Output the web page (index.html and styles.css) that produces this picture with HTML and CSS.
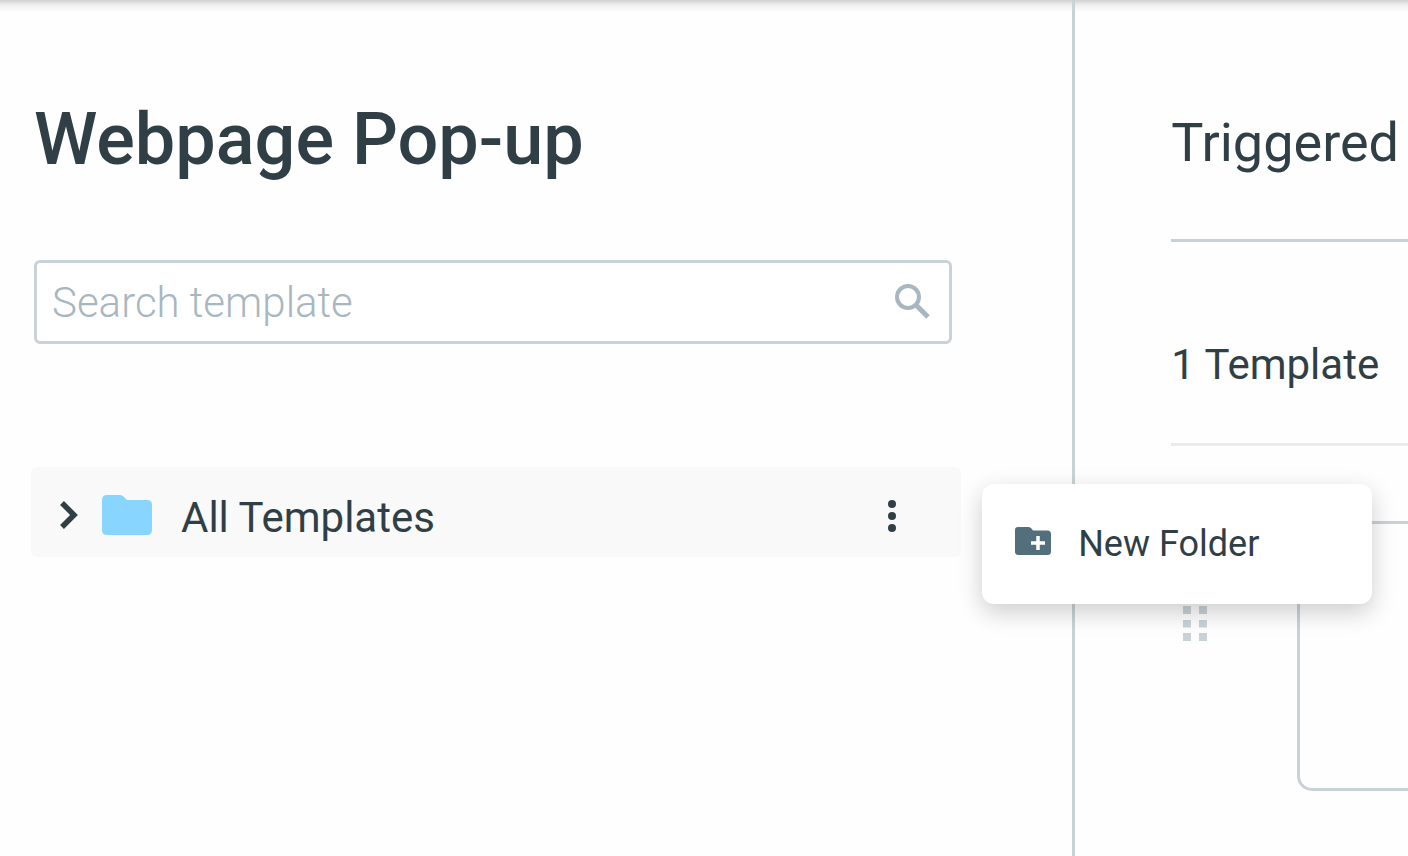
FILE: index.html
```html
<!DOCTYPE html>
<html lang="en">
  <head>
    <meta charset="UTF-8" />
    <meta name="viewport" content="width=device-width, initial-scale=1.0" />
    <title>Webpage Pop-up</title>
    <link rel="stylesheet" href="styles.css">
  </head>
  <body>
    <div class="page">
      <aside class="sidebar">
        <h1 class="title">Webpage Pop-up</h1>
        <form class="search">
          <input class="search-input" type="text" placeholder="Search template" aria-label="Search template" />
          <button class="icon-button" type="button" aria-label="Search">
            <svg width="36" height="36" viewBox="0 0 36 36">
              <circle cx="14" cy="13" r="11" fill="none" stroke="#a8b7bf" stroke-width="4" />
              <path d="M22 21L34 33" stroke="#a8b7bf" stroke-width="5" />
            </svg>
          </button>
        </form>
        <div class="folder-row">
          <button class="icon-button" type="button" aria-label="Expand">
            <svg width="18" height="28" viewBox="0 0 18 28">
              <path d="M2 2L14 14L2 26" fill="none" stroke="#303f46" stroke-width="5.500" />
            </svg>
          </button>
          <svg class="folder-icon" width="50" height="40" viewBox="0 0 50 40">
            <path d="M5 0H18Q20 0 21.500 1.500L25 5H45Q50 5 50 10V35Q50 40 45 40H5Q0 40 0 35V5Q0 0 5 0Z" fill="#88d5ff" />
          </svg>
          <span class="folder-name">All Templates</span>
          <button class="icon-button" type="button" aria-label="More">
            <svg width="8" height="34" viewBox="0 0 8 34" fill="#303f46">
              <circle cx="4" cy="6" r="4" />
              <circle cx="4" cy="18" r="4" />
              <circle cx="4" cy="30" r="4" />
            </svg>
          </button>
          <div class="menu">
            <button class="menu-item" type="button">
              <svg width="36" height="34" viewBox="0 0 36 34">
                <path d="M3 0H13Q15 0 16 1L18 3.500H32.500Q36 3.500 36 7V24.500Q36 28 32.500 28H3.500Q0 28 0 24.500V3Q0 0 3 0Z" fill="#546f7c" />
                <path d="M23 9V23M16 16H30" stroke="#fff" stroke-width="3.500" />
              </svg>
              <span>New Folder</span>
            </button>
          </div>
        </div>
      </aside>
      <main class="content">
        <h2 class="heading">Triggered</h2>
        <div class="count">1 Template</div>
        <div class="template">
          <svg class="handle" width="24" height="36" viewBox="0 0 24 36" fill="#c8d2d7">
            <path d="M0 1H8V9H0ZM16 1H24V9H16ZM0 15H8V22.500H0ZM16 15H24V22.500H16ZM0 28H8V36H0ZM16 28H24V36H16Z" />
          </svg>
          <div class="card"></div>
        </div>
      </main>
    </div>
  </body>
</html>
```
FILE: styles.css
```css
* {
  box-sizing: border-box;
}
body {
  margin: 0;
  background-color: #fefefe;
  color: #303f46;
  font-family: Roboto, sans-serif;
  font-size: 42px;
  line-height: 50px;
}
/* shadow of the top bar */
.page {
  display: grid;
  grid-template-columns: minmax(0, 42fr) minmax(0, 13fr);
  min-height: 100vh;
  background: linear-gradient(rgba(0, 0, 0, 0.18), rgba(0, 0, 0, 0.06) 5px, rgba(0, 0, 0, 0) 12px);
}
.sidebar {
  padding: 98px 111px 0 31px;
  border-right: 3px solid #c8d2d7;
}
.title {
  margin: 0 0 78px 3px;
  font-size: 72px;
  font-weight: 500;
  line-height: 84px;
}
.search {
  display: flex;
  align-items: center;
  height: 84px;
  margin: 0 9px 123px 3px;
  padding: 0 19px 0 15px;
  background-color: #fff;
  border: 3px solid #c8d2d7;
  border-radius: 6px;
}
.search-input {
  flex: 1;
  min-width: 0;
  padding: 2px 0 0;
  border: 0;
  outline: 0;
  background: none;
  color: inherit;
  font: inherit;
  font-weight: 300;
}
.search-input::placeholder {
  color: #a8b7bf;
}
.icon-button {
  display: flex;
  padding: 0;
  border: 0;
  background: none;
  cursor: pointer;
}
.folder-row {
  position: relative;
  display: flex;
  align-items: center;
  height: 90px;
  padding: 6px 65px 0 29px;
  background-color: #f9f9f9;
  border-radius: 6px;
}
.folder-icon {
  margin: 0 29px 0 24px;
}
.folder-name {
  flex: 1;
  padding-top: 6px;
}
.menu {
  position: absolute;
  top: 17px;
  left: calc(100% + 21px);
  z-index: 1;
  width: 390px;
  background-color: #fff;
  border-radius: 12px;
  box-shadow: 0 8px 24px rgba(0, 0, 0, 0.2);
}
.menu-item {
  display: flex;
  align-items: center;
  gap: 27px;
  width: 100%;
  height: 120px;
  padding: 0 33px;
  border: 0;
  background: none;
  color: inherit;
  font: inherit;
  font-size: 36px;
  cursor: pointer;
}
.content {
  padding: 111px 0 0 96px;
  overflow: hidden;
}
.heading {
  margin: 0;
  padding-bottom: 64px;
  border-bottom: 3px solid #c8d2d7;
  font-size: 54px;
  font-weight: 400;
  line-height: 64px;
}
.count {
  padding: 98px 0 53px;
  border-bottom: 3px solid #eaebeb;
}
.template {
  display: flex;
  gap: 90px;
  margin-top: 75px;
  padding-left: 12px;
}
.handle {
  flex: none;
  margin-top: 84px;
}
.card {
  flex: 1;
  height: 270px;
  border: 3px solid #c8d2d7;
  border-right: 0;
  border-radius: 15px 0 0 15px;
}
```
